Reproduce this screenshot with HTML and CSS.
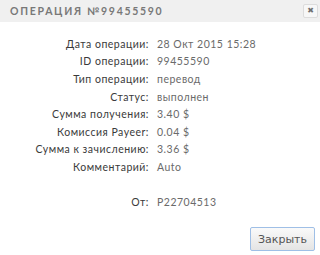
FILE: index.html
```html
<!DOCTYPE html>
<html lang="ru">
<head>
    <meta charset="UTF-8">
    <title>Операция №99455590</title>
    <link rel="stylesheet" href="styles.css">
</head>
<body>
    <div class="dialog">
        <div class="dialog-header">
            <span class="dialog-title">Операция №99455590</span>
            <button class="close-btn" title="Закрыть">&#x2716;</button>
        </div>

        <div class="dialog-body">
            <div class="info">
                <div class="row"><span class="label">Дата операции:</span><span class="value">28 Окт 2015 15:28</span></div>
                <div class="row"><span class="label">ID операции:</span><span class="value">99455590</span></div>
                <div class="row"><span class="label">Тип операции:</span><span class="value">перевод</span></div>
                <div class="row"><span class="label">Статус:</span><span class="value">выполнен</span></div>
                <div class="row"><span class="label">Сумма получения:</span><span class="value">3.40 $</span></div>
                <div class="row"><span class="label">Комиссия Payeer:</span><span class="value">0.04 $</span></div>
                <div class="row"><span class="label">Сумма к зачислению:</span><span class="value">3.36 $</span></div>
                <div class="row"><span class="label">Комментарий:</span><span class="value">Auto</span></div>
                <div class="row spacer"></div>
                <div class="row"><span class="label">От:</span><span class="value">P22704513</span></div>
            </div>
        </div>

        <div class="dialog-footer">
            <button class="btn">Закрыть</button>
        </div>
    </div>
</body>
</html>
```

FILE: styles.css
```css
* {
    margin: 0;
    padding: 0;
    box-sizing: border-box;
}

body {
    font-family: Lato, "Open Sans", sans-serif;
    background: #fff;
    width: 320px;
    height: 255px;
    overflow: hidden;
}

.dialog {
    display: flex;
    flex-direction: column;
    height: 255px;
}

.dialog-header {
    height: 22px;
    background: #f0f0f0;
    display: flex;
    align-items: center;
    justify-content: space-between;
    padding: 0 2px 0 10px;
}

.dialog-title {
    text-transform: uppercase;
    font-size: 10.5px;
    font-weight: bold;
    letter-spacing: 1.7px;
    color: #787878;
}

.close-btn {
    width: 15px;
    height: 14px;
    border: 1px solid #dcdcdc;
    border-radius: 2px;
    background: #f7f7f7;
    color: #707070;
    font-size: 8px;
    line-height: 12px;
    text-align: center;
    font-family: "DejaVu Sans", sans-serif;
}

.dialog-body {
    flex: 1;
    padding-top: 13px;
}

.row {
    display: flex;
    height: 17.6px;
    align-items: center;
    font-size: 10.5px;
    letter-spacing: 0.5px;
}

.label {
    width: 149px;
    text-align: right;
    color: #3a3a3a;
}

.value {
    padding-left: 8px;
    color: #6a6a6a;
}

.dialog-footer {
    display: flex;
    justify-content: flex-end;
    padding: 0 5px 4px 0;
}

.btn {
    width: 65px;
    height: 24px;
    border: 1px solid #9fbfe6;
    border-radius: 2px;
    background: linear-gradient(#fafafa, #e4e4e4);
    color: #555;
    font-family: "DejaVu Sans", sans-serif;
    font-size: 11px;
}
```
